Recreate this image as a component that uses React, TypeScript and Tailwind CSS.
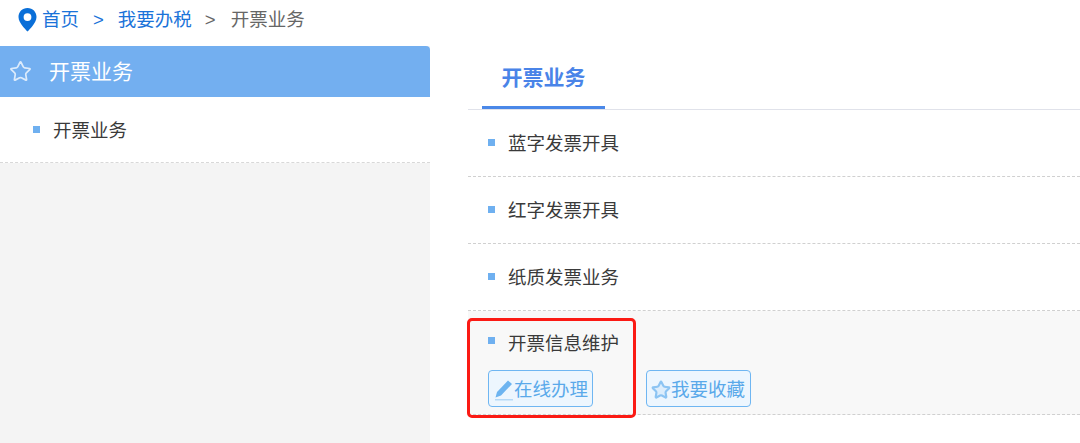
import { Star } from 'lucide-react';

const font = { fontFamily: '"Liberation Sans", "Noto Sans CJK SC", sans-serif' };

function Bullet() {
  return <span className="w-[7px] h-[7px] bg-[#6fb0f0] shrink-0 mb-[2px]" />;
}

function Row({ label }: { label: string }) {
  return (
    <div className="h-[67px] flex items-center pl-5 gap-[13px] border-b border-dashed border-[#d0d0d0] text-[18.5px] text-[#3a3a3a]">
      <Bullet />
      <span className="pt-[1px]">{label}</span>
    </div>
  );
}

export default function App() {
  return (
    <div className="w-[1080px] h-[443px] overflow-hidden bg-white flex flex-col" style={font}>
      {/* Breadcrumb */}
      <div className="h-[46px] shrink-0 flex items-center pl-[18px] pb-[6px] text-[18.5px]">
        <svg width="19" height="24" viewBox="0 0 19 24">
          <path
            fillRule="evenodd"
            fill="#0a6fd8"
            d="M9.500 0C4.300 0 .5 3.900.5 9c0 3.200 2 6.500 4.200 9.200 1.600 2 3.400 3.900 4.800 5.300 1.400-1.400 3.200-3.300 4.800-5.300 2.200-2.700 4.200-6 4.200-9.200 0-5.100-3.800-9-9-9zm0 5.200a3.900 3.900 0 1 1 0 7.800 3.900 3.900 0 0 1 0-7.800z"
          />
        </svg>
        <span className="ml-[5px] text-[#1a73d9]">首页</span>
        <span className="ml-[14px] text-[#1a73d9]">&gt;</span>
        <span className="ml-[14px] text-[#1a73d9]">我要办税</span>
        <span className="ml-[13px] text-[#666666]">&gt;</span>
        <span className="ml-[15px] text-[#666666]">开票业务</span>
      </div>

      <div className="flex flex-1 min-h-0">
        {/* Sidebar */}
        <div className="w-[430px] shrink-0 bg-[#f4f4f4] flex flex-col">
          <div className="h-[51px] bg-[#73aff0] rounded-tr-[4px] flex items-center pl-[9px] text-white text-[21px]">
            <Star size={23} strokeWidth={1.8} className="text-[#dcebfb]" />
            <span className="ml-[17px]">开票业务</span>
          </div>
          <div className="h-[66px] bg-white border-b border-dashed border-[#d8d8d8] flex items-center pl-[33px] gap-[13px] text-[18.5px] text-[#3a3a3a]">
            <span className="w-[7px] h-[7px] bg-[#6fb0f0] shrink-0 mb-[1px]" />
            <span className="pt-[3px]">开票业务</span>
          </div>
        </div>

        {/* Main */}
        <div className="flex-1 ml-[38px] min-w-0">
          <div className="h-[64px] border-b border-[#e0e2ea]">
            <div className="w-[123px] h-[63px] ml-[14px] border-b-[3px] border-[#4a88e8] flex items-center justify-center pt-[4px] text-[21px] font-bold text-[#4a84e8]">
              开票业务
            </div>
          </div>
          <Row label="蓝字发票开具" />
          <Row label="红字发票开具" />
          <Row label="纸质发票业务" />

          <div className="relative h-[104px] bg-[#f8f8f8] border-b border-dashed border-[#d0d0d0] pl-5">
            <div className="h-[59px] flex items-center gap-[13px] text-[18.5px] text-[#3a3a3a]">
              <span className="w-[7px] h-[7px] bg-[#6fb0f0] shrink-0" />
              <span className="pt-[7px]">开票信息维护</span>
            </div>
            <div className="flex gap-[53px]">
              <button className="w-[105px] h-[37px] flex items-center pl-[4px] border border-[#6fb6f2] rounded-[4px] bg-[#edf6fe] text-[18.5px] text-[#5aa9ea]">
                <svg width="21" height="22" viewBox="0 0 21 22" className="shrink-0 mt-[3px]">
                  <path fill="#6db4f0" d="M15 1.500l4 3.500L8 16.500l-5.500 2 1.500-5.500z" />
                  <rect x="2" y="20" width="18" height="1.500" fill="#b5d9f7" />
                </svg>
                <span className="pt-[3px]">在线办理</span>
              </button>
              <button className="w-[105px] h-[37px] flex items-center pl-[4px] border border-[#6fb6f2] rounded-[4px] bg-[#edf6fe] text-[18.5px] text-[#5aa9ea]">
                <Star size={20} strokeWidth={2.6} className="text-[#8cc4f3] fill-[#dcedfc] shrink-0 mt-[3px]" />
                <span className="pt-[3px]">我要收藏</span>
              </button>
            </div>
            {/* Red annotation */}
            <div className="absolute left-[-1px] top-[7px] w-[169px] h-[100px] border-[3px] border-[#fb1a14] rounded-[5px]" />
          </div>
        </div>
      </div>
    </div>
  );
}
